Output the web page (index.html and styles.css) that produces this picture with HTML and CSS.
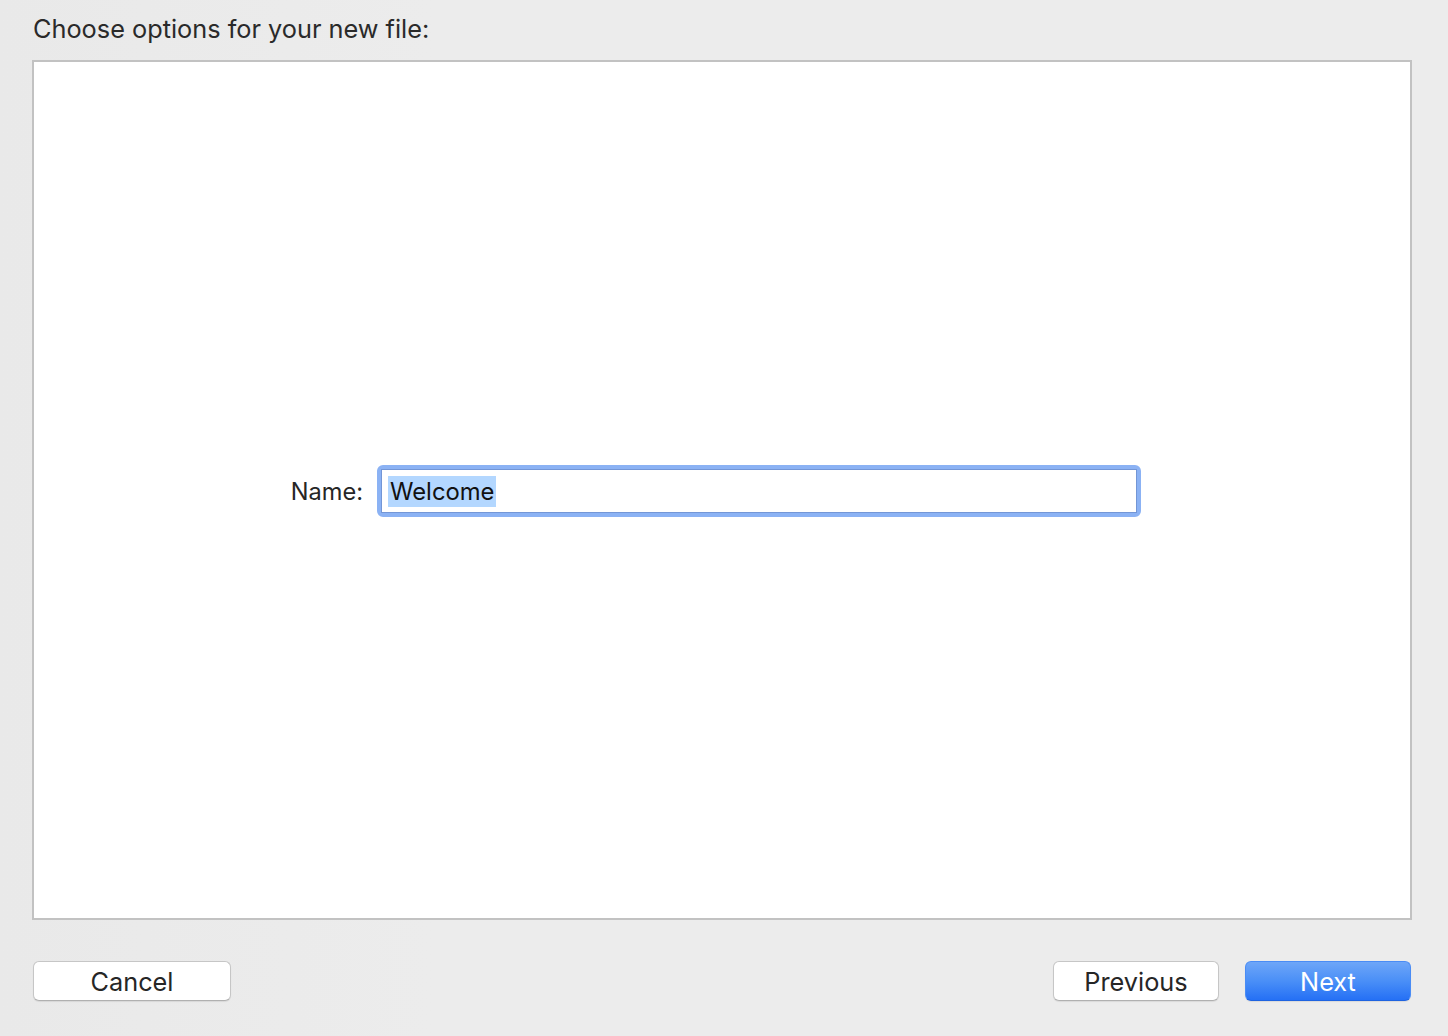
FILE: index.html
```html
<!DOCTYPE html>
<html>
<head>
<meta charset="utf-8">
<link rel="stylesheet" href="styles.css">
</head>
<body>
<div class="sheet">
  <div class="header">Choose options for your new file:</div>
  <div class="panel">
    <div class="row">
      <label class="label">Name:</label>
      <div class="field">
        <div class="field-inner"><span class="sel">Welcome</span></div>
      </div>
    </div>
  </div>
  <div class="footer">
    <button class="btn cancel">Cancel</button>
    <div class="spacer"></div>
    <button class="btn prev">Previous</button>
    <button class="btn next">Next</button>
  </div>
</div>
</body>
</html>
```
FILE: styles.css
```css
html, body {
  margin: 0;
  padding: 0;
  height: 100%;
}
body {
  background: #ececec;
  font-family: Inter, "Noto Sans", "Liberation Sans", sans-serif;
  color: #262626;
}
.sheet {
  width: 1448px;
  height: 1036px;
  display: flex;
  flex-direction: column;
  background: linear-gradient(90deg, #e9e9e9 0%, #ececec 30%, #ececec 100%);
}
.header {
  height: 60px;
  box-sizing: border-box;
  padding: 14px 0 0 33px;
  font-size: 25.3px;
  line-height: 30px;
  color: #2a2a2a;
}
.panel {
  margin-left: 32px;
  width: 1380px;
  height: 860px;
  box-sizing: border-box;
  border: 2px solid #c2c2c2;
  background: #ffffff;
  display: flex;
  align-items: center;
}
.row {
  display: flex;
  align-items: center;
  margin-left: 229px;
  margin-top: 1px;
}
.label {
  width: 100px;
  text-align: right;
  font-size: 23.6px;
  color: #262626;
  margin-right: 14px;
  padding-top: 2px;
}
.field {
  flex: none;
  width: 764px;
  height: 52px;
  box-sizing: border-box;
  border: 4px solid #8bb2f4;
  border-radius: 6px;
  background: #8bb2f4;
}
.field-inner {
  height: 100%;
  box-sizing: border-box;
  border: 1px solid #7396d6;
  background: #ffffff;
  display: flex;
  align-items: center;
  padding-left: 6px;
  padding-top: 1px;
}
.sel {
  background: #b3d7ff;
  font-size: 23.8px;
  line-height: 31px;
  color: #111;
  padding: 0 2px 0 2px;
}
.footer {
  display: flex;
  padding: 41px 37px 0 33px;
  align-items: flex-start;
}
.spacer {
  flex: 1;
}
.btn {
  height: 40px;
  box-sizing: border-box;
  border-radius: 6px;
  font-family: Inter, "Noto Sans", "Liberation Sans", sans-serif;
  font-size: 25.3px;
  padding: 2px 0 0 0;
  line-height: 36px;
  color: #262626;
  background: #ffffff;
  border: 1px solid #c6c6c6;
  border-bottom-color: #b0b0b0;
  box-shadow: 0 1px 1px rgba(0,0,0,0.08);
}
.cancel {
  width: 198px;
}
.prev {
  width: 166px;
  margin-right: 26px;
}
.next {
  width: 166px;
  color: #ffffff;
  border: 1px solid #4a8cf5;
  border-bottom-color: #1e63e0;
  background: linear-gradient(180deg, #6ea6f8 0%, #4a8ff7 50%, #2570f5 100%);
}
```
